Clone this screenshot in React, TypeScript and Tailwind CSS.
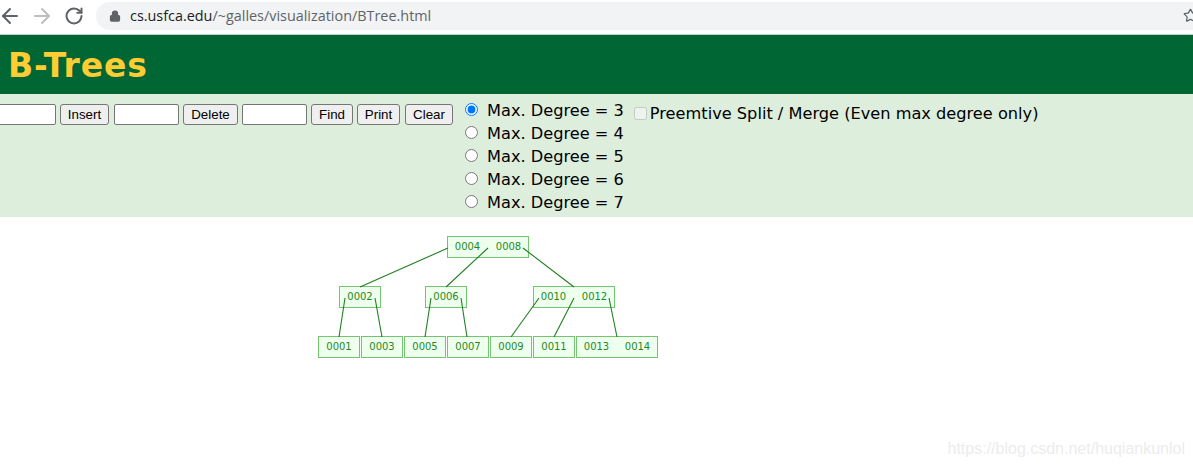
import { ArrowLeft, ArrowRight, Lock, RotateCw, Star } from 'lucide-react';

// tree nodes sit on a free canvas: left/top relative to the canvas, which starts at y=217
const NODES = [
  { x: 447, y: 19, w: 82, keys: ['0004', '0008'] },
  { x: 339, y: 69, w: 42, keys: ['0002'] },
  { x: 425, y: 69, w: 42, keys: ['0006'] },
  { x: 533, y: 69, w: 82, keys: ['0010', '0012'] },
  { x: 318, y: 119, w: 42, keys: ['0001'] },
  { x: 361, y: 119, w: 42, keys: ['0003'] },
  { x: 404, y: 119, w: 42, keys: ['0005'] },
  { x: 447, y: 119, w: 42, keys: ['0007'] },
  { x: 490, y: 119, w: 42, keys: ['0009'] },
  { x: 533, y: 119, w: 42, keys: ['0011'] },
  { x: 576, y: 119, w: 82, keys: ['0013', '0014'] },
];

const EDGES = [
  [448, 31, 360, 70],
  [488, 31, 446, 70],
  [523, 31, 574, 70],
  [345, 81, 339, 120],
  [375, 81, 382, 120],
  [431, 81, 425, 120],
  [461, 81, 467, 120],
  [539, 81, 511, 120],
  [574, 81, 554, 120],
  [609, 81, 617, 120],
];

const DEGREES = [3, 4, 5, 6, 7];

function BrowserBar() {
  return (
    <div className="flex h-[35px] items-center border-b border-[#c8c9cb] bg-white pb-[3px]">
      <ArrowLeft className="ml-[-2px] h-[24px] w-[24px] text-[#5f6368]" strokeWidth={2} />
      <ArrowRight className="ml-[8px] h-[24px] w-[24px] text-[#bcbec1]" strokeWidth={2} />
      <RotateCw className="ml-[10px] h-[20px] w-[20px] text-[#5f6368]" strokeWidth={2.4} />
      <div className="ml-[12px] flex h-[28px] flex-1 items-center rounded-l-[14px] bg-[#f1f3f4] pl-[13px] font-['Open_Sans',sans-serif] text-[14.4px]">
        <Lock className="h-[12px] w-[12px] fill-[#5f6368] text-[#5f6368]" strokeWidth={2.5} />
        <span className="ml-[9px] text-[#202124]">cs.usfca.edu</span>
        <span className="text-[#5f6368]">/~galles/visualization/BTree.html</span>
        <Star className="ml-auto mr-[-5px] h-[15px] w-[15px] text-[#5f6368]" strokeWidth={2} />
      </div>
    </div>
  );
}

function TextBox({ className }: { className?: string }) {
  return <input type="text" className={`h-[21px] w-[65px] rounded-[2px] border border-[#767676] bg-white ${className ?? ''}`} />;
}

function Btn({ label, className }: { label: string; className: string }) {
  return (
    <button className={`h-[21px] rounded-[3px] border border-[#767676] bg-[#efefef] text-center font-['Liberation_Sans',sans-serif] text-[13.33px] leading-none text-black ${className}`}>
      {label}
    </button>
  );
}

function Controls() {
  return (
    <div className="flex h-[123px] bg-[#ddeedd] font-['DejaVu_Sans',sans-serif] text-[16.2px] text-black">
      <div className="ml-[-9px] mt-[10px] flex h-[21px] gap-[4px]">
        <TextBox />
        <Btn label="Insert" className="w-[49px]" />
        <TextBox className="ml-[1px]" />
        <Btn label="Delete" className="w-[55px]" />
        <TextBox />
        <Btn label="Find" className="w-[42px]" />
        <Btn label="Print" className="w-[43px]" />
        <Btn label="Clear" className="ml-[1px] w-[48px]" />
      </div>
      <div className="ml-[12px] mt-[4px] flex flex-col">
        {DEGREES.map((d) => (
          <label key={d} className="flex h-[23px] items-center whitespace-nowrap">
            <input type="radio" name="degree" defaultChecked={d === 3} className="h-[13px] w-[13px]" />
            <span className="ml-[9px] pt-[4px]">Max. Degree = {d}</span>
          </label>
        ))}
      </div>
      <label className="ml-[10px] mt-[8px] flex h-[23px] items-center whitespace-nowrap">
        <input type="checkbox" disabled className="h-[13px] w-[13px]" />
        <span className="ml-[3px] pt-[2px]">Preemtive Split / Merge (Even max degree only)</span>
      </label>
    </div>
  );
}

function TreeCanvas() {
  return (
    <div className="relative h-[250px] bg-white font-['DejaVu_Sans',sans-serif] text-[10px] text-[#1f8a1f]">
      {NODES.map((n) => (
        <div
          key={n.keys[0]}
          className="absolute flex h-[22px] items-center justify-center border border-[#74c474] bg-[#eeffee] pb-[2px]"
          style={{ left: n.x, top: n.y, width: n.w }}
        >
          {n.keys.map((k) => (
            <span key={k} className="w-[41px] shrink-0 text-center">
              {k}
            </span>
          ))}
        </div>
      ))}
      <svg className="absolute left-0 top-0" width="1193" height="250">
        {EDGES.map(([x1, y1, x2, y2]) => (
          <line key={`${x1}-${x2}`} x1={x1} y1={y1} x2={x2} y2={y2} stroke="#1f7f1f" strokeWidth="1.1" />
        ))}
      </svg>
      <span className="absolute right-[8px] top-[222px] font-['Liberation_Sans',sans-serif] text-[16px] leading-5 text-[#ececec]">
        https://blog.csdn.net/huqiankunlol
      </span>
    </div>
  );
}

export default function App() {
  return (
    <div className="h-[467px] overflow-hidden bg-white">
      <BrowserBar />
      <div className="flex h-[59px] items-center bg-[#006633] pl-[8px] pt-[2px] font-['DejaVu_Sans',sans-serif] text-[33px] font-bold tracking-[0.9px] text-[#ffcc33]">
        B-Trees
      </div>
      <Controls />
      <TreeCanvas />
    </div>
  );
}
